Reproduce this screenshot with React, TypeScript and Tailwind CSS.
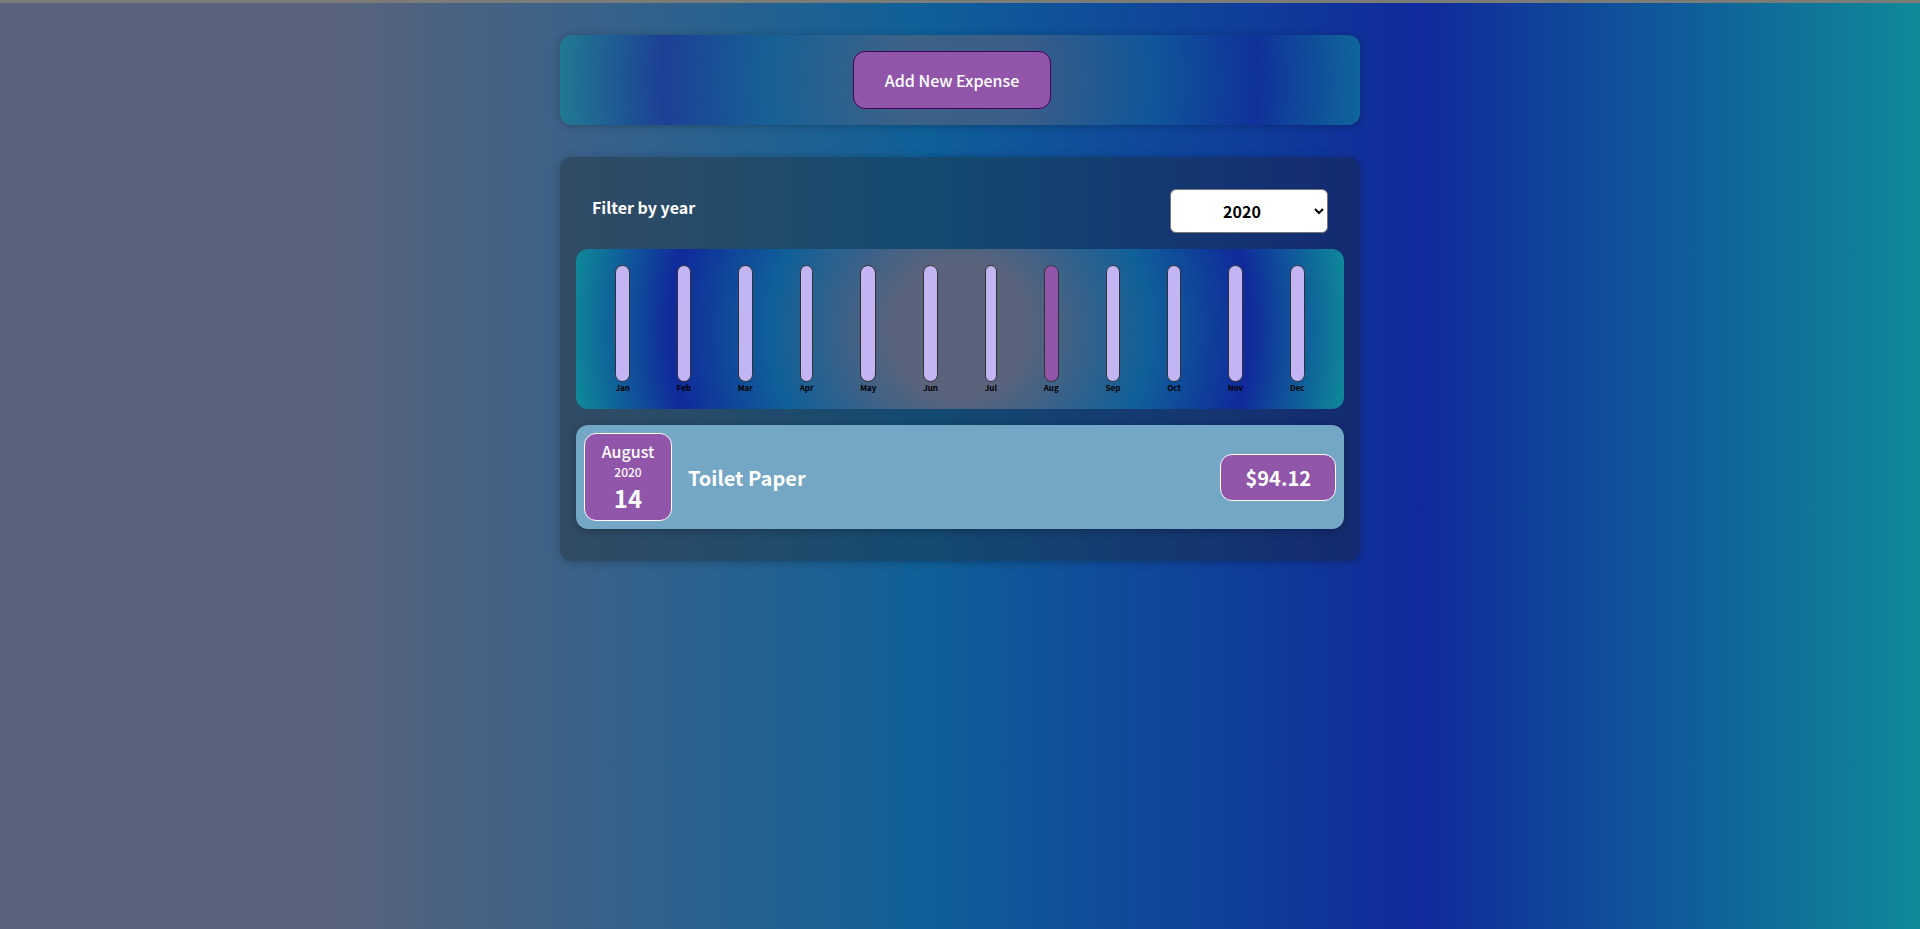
const MONTHS = ['Jan', 'Feb', 'Mar', 'Apr', 'May', 'Jun', 'Jul', 'Aug', 'Sep', 'Oct', 'Nov', 'Dec'];

interface Expense {
  title: string;
  amount: number;
  month: string;
  year: number;
  day: number;
}

const EXPENSES: Expense[] = [
  { title: 'Toilet Paper', amount: 94.12, month: 'August', year: 2020, day: 14 },
];

function NewExpense() {
  return (
    <section className="rounded-xl bg-[radial-gradient(circle,rgb(89_99_124/0.6)_0%,rgb(89_99_124/0.6)_17%,rgb(15_96_153/0.6)_48%,rgb(16_42_155/0.6)_74%,rgb(15_138_153/0.6)_100%)] p-4 text-center shadow-[0_1px_8px_rgba(0,0,0,0.25)]">
      <button
        type="button"
        className="mr-4 h-[58px] cursor-pointer rounded-xl border border-[#40005d] bg-[#9156a9] px-[31px] text-base font-medium text-white"
      >
        Add New Expense
      </button>
    </section>
  );
}

function YearFilter() {
  return (
    <div className="flex items-center justify-between px-4">
      <label htmlFor="year" className="mb-2 text-base font-bold text-white">
        Filter by year
      </label>
      <select
        id="year"
        defaultValue="2020"
        className="h-11 w-[158px] rounded-md border border-[#767676] bg-white pr-[18px] pl-4 text-center text-base font-bold text-black"
      >
        <option value="2022">2022</option>
        <option value="2021">2021</option>
        <option value="2020">2020</option>
        <option value="2019">2019</option>
      </select>
    </div>
  );
}

function Chart() {
  return (
    <div className="flex h-40 justify-around rounded-xl bg-[radial-gradient(circle,#5a637c_0%,#5a637c_17%,#0f6099_48%,#102a9b_74%,#0f8a99_100%)] p-4">
      {MONTHS.map((month) => (
        <div key={month} className="flex flex-col items-center">
          <div
            className={`w-full flex-1 rounded-xl border border-[#313131] ${month === 'Aug' ? 'bg-[#9156a9]' : 'bg-[#c3b4f3]'}`}
          />
          <span className="text-[8px] leading-[11px] font-bold text-black">{month}</span>
        </div>
      ))}
    </div>
  );
}

function ExpenseItem({ expense }: { expense: Expense }) {
  return (
    <li className="flex items-center gap-4 rounded-xl bg-[#74a6c5] p-2 text-white shadow-[0_2px_8px_rgba(0,0,0,0.25)]">
      <div className="flex size-[88px] flex-col items-center justify-center rounded-xl border border-white bg-[#9156a9]">
        <span className="text-base leading-[26px] font-medium">{expense.month}</span>
        <span className="text-xs leading-4 font-medium">{expense.year}</span>
        <span className="text-2xl leading-9 font-bold">{expense.day}</span>
      </div>
      <h2 className="flex-1 text-xl leading-[29px] font-bold">{expense.title}</h2>
      <div className="rounded-xl border border-white bg-[#9156a9] px-6 py-2 text-xl leading-[29px] font-bold">
        ${expense.amount}
      </div>
    </li>
  );
}

export default function App() {
  return (
    <div className="min-h-screen bg-[linear-gradient(90deg,#5a637c_0%,#5a637c_17%,#0f6099_48%,#102a9b_74%,#0f8a99_100%)] font-['Noto_Sans_CJK_JP',sans-serif]">
      <div className="h-[3px] bg-[#7b7b78]" />
      <main className="mx-auto flex max-w-[800px] flex-col gap-8 pt-8">
        <NewExpense />
        <section className="flex flex-col gap-4 rounded-xl bg-[rgba(31,31,31,0.33)] px-4 py-8 shadow-[0_1px_8px_rgba(0,0,0,0.25)]">
          <YearFilter />
          <Chart />
          <ul>
            {EXPENSES.map((expense) => (
              <ExpenseItem key={expense.title} expense={expense} />
            ))}
          </ul>
        </section>
      </main>
    </div>
  );
}
